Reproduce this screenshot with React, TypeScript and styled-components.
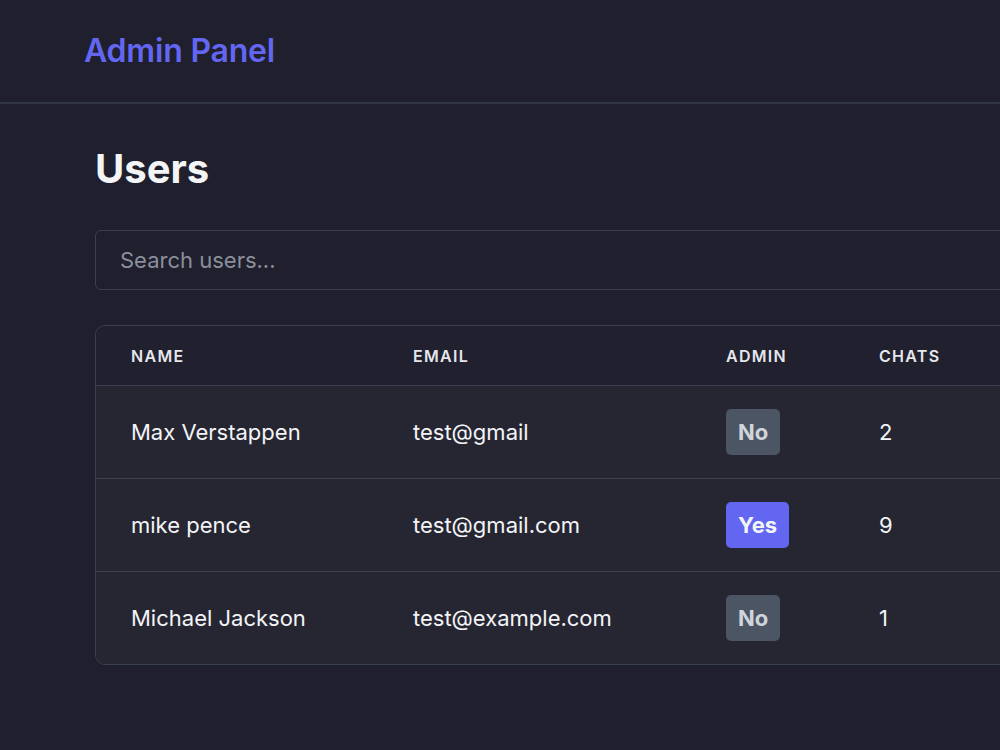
import styled, { createGlobalStyle } from 'styled-components';

const users = [
  { name: 'Max Verstappen', email: 'test@gmail', admin: false, chats: 2 },
  { name: 'mike pence', email: 'test@gmail.com', admin: true, chats: 9 },
  { name: 'Michael Jackson', email: 'test@example.com', admin: false, chats: 1 },
];

export default function App() {
  return (
    <>
      <GlobalStyle />
      <StyledPage>
        <StyledHeader>
          <StyledBrand>Admin Panel</StyledBrand>
        </StyledHeader>
        <StyledMain>
          <StyledTitle>Users</StyledTitle>
          <StyledSearch placeholder="Search users..." />
          <StyledTable>
            <StyledHeadRow>
              <StyledHeadCell>Name</StyledHeadCell>
              <StyledHeadCell>Email</StyledHeadCell>
              <StyledHeadCell>Admin</StyledHeadCell>
              <StyledHeadCell>Chats</StyledHeadCell>
            </StyledHeadRow>
            {users.map((u) => (
              <StyledRow key={u.name}>
                <StyledCell>{u.name}</StyledCell>
                <StyledCell>{u.email}</StyledCell>
                <StyledCell>
                  <StyledBadge $active={u.admin}>{u.admin ? 'Yes' : 'No'}</StyledBadge>
                </StyledCell>
                <StyledCell>{u.chats}</StyledCell>
              </StyledRow>
            ))}
          </StyledTable>
        </StyledMain>
      </StyledPage>
    </>
  );
}

const GlobalStyle = createGlobalStyle`
  html, body {
    margin: 0;
    background: #1f1f2d;
    overflow: hidden;
  }
  body {
    font-family: Inter, "Noto Sans", sans-serif;
    color: #f3f4f6;
  }
`;

const StyledPage = styled.div`
  width: 1400px;
  min-height: 750px;
  background: #1f1f2d;
`;

const StyledHeader = styled.header`
  display: flex;
  align-items: center;
  height: 104px;
  padding: 0 0 2px 84px;
  border-bottom: 2px solid #323746;
  box-sizing: border-box;
`;

const StyledBrand = styled.h1`
  margin: 0;
  font-size: 32px;
  font-weight: 600;
  color: #6366f1;
  letter-spacing: -0.2px;
`;

const StyledMain = styled.main`
  display: flex;
  flex-direction: column;
  padding: 38px 0 0 95px;
  width: 1200px;
`;

const StyledTitle = styled.h2`
  margin: 0;
  font-size: 40px;
  line-height: 54px;
  font-weight: 700;
  color: #f3f4f6;
`;

const StyledSearch = styled.input`
  margin-top: 34px;
  height: 60px;
  padding: 0 24px;
  box-sizing: border-box;
  background: #1f1f2d;
  border: 1px solid #3a4152;
  border-radius: 6px;
  font-family: inherit;
  font-size: 22px;
  color: #f3f4f6;
  outline: none;

  &::placeholder {
    color: #8b8f9b;
  }
`;

const StyledTable = styled.div`
  margin-top: 35px;
  border: 1px solid #3a4152;
  border-radius: 10px;
  overflow: hidden;
`;

const StyledHeadRow = styled.div`
  display: grid;
  grid-template-columns: 282px 313px 153px 1fr;
  align-items: center;
  height: 59px;
  background: #20202e;
`;

const StyledHeadCell = styled.div`
  padding-left: 35px;
  font-size: 16px;
  font-weight: 600;
  text-transform: uppercase;
  letter-spacing: 1.3px;
  color: #e5e7eb;
`;

const StyledRow = styled.div`
  display: grid;
  grid-template-columns: 282px 313px 153px 1fr;
  align-items: center;
  height: 93px;
  box-sizing: border-box;
  border-top: 1px solid #3a4152;
  background: #262633;
`;

const StyledCell = styled.div`
  padding-left: 35px;
  font-size: 22px;
  color: #f3f4f6;
`;

const StyledBadge = styled.span<{ $active: boolean }>`
  display: inline-flex;
  align-items: center;
  height: 46px;
  padding: 0 12px;
  border-radius: 5px;
  font-size: 22px;
  font-weight: 700;
  background: ${({ $active }) => ($active ? '#6366f1' : '#4b5563')};
  color: ${({ $active }) => ($active ? '#f3f4f6' : '#d1d5db')};
`;
